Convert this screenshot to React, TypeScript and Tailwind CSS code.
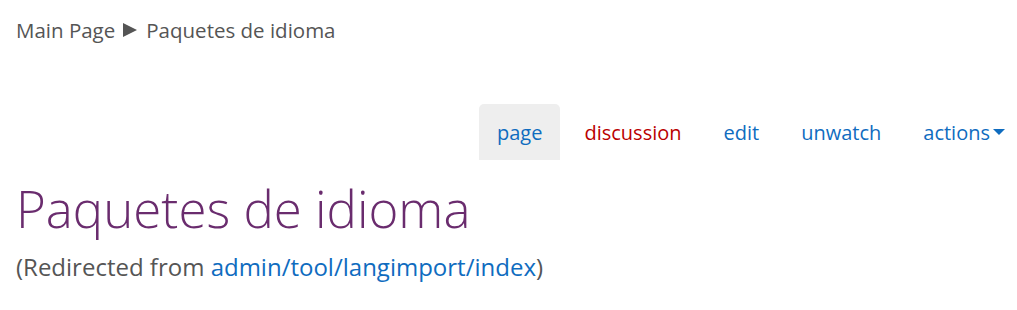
const tabs = [
  { label: 'page', active: true, color: 'text-[#0f6cbf]' },
  { label: 'discussion', active: false, color: 'text-[#ba0000]' },
  { label: 'edit', active: false, color: 'text-[#0f6cbf]' },
  { label: 'unwatch', active: false, color: 'text-[#0f6cbf]' },
];

export default function App() {
  return (
    <div className="w-full h-[310px] bg-white font-['Open_Sans',sans-serif] overflow-hidden">
      <div className="px-4 pt-[15px] text-[20.5px] leading-[30px] text-[#555555] flex items-center">
        <a href="#" className="text-[#555555]">Main Page</a>
        <span className="ml-[8px] mr-[9px] w-0 h-0 border-l-[14px] border-y-[7px] border-l-[#555555] border-y-transparent" />
        <span>Paquetes de idioma</span>
      </div>

      <nav className="mt-[59px] flex justify-end gap-[6px] pr-[12px]">
        {tabs.map((t) => (
          <a
            key={t.label}
            href="#"
            className={`px-[18px] pt-[15px] pb-[13px] text-[20px] leading-[28px] rounded-t-[5px] ${t.color} ${t.active ? 'bg-[#eeeeee]' : ''}`}
          >
            {t.label}
          </a>
        ))}
        <a href="#" className="pl-[18px] pt-[15px] pb-[13px] text-[20px] leading-[28px] text-[#0f6cbf] flex items-start">
          actions
          <span className="mt-[10px] ml-[3px] w-0 h-0 border-l-[6px] border-r-[6px] border-t-[6px] border-l-transparent border-r-transparent border-t-[#0f6cbf]" />
        </a>
      </nav>

      <h1 className="px-4 mt-[17px] text-[51px] leading-[62px] font-light text-[#6a2c6e]">
        Paquetes de idioma
      </h1>

      <p className="px-4 mt-[12px] text-[24px] leading-[32px] text-[#555555]">
        (Redirected from <a href="#" className="text-[#0f6cbf]">admin/tool/langimport/index</a>)
      </p>
    </div>
  );
}
